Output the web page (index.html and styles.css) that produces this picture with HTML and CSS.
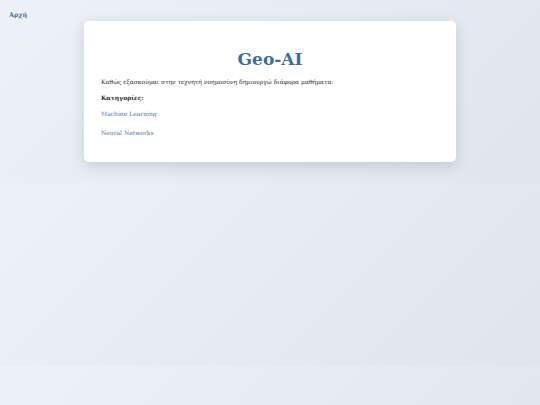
FILE: index.html
```html
<!DOCTYPE html>
<html lang="el">
<head>
<meta charset="utf-8">
<title>Geo-AI</title>
<link rel="stylesheet" href="styles.css">
</head>
<body>
<nav class="topnav"><a class="home" href="#">Αρχή</a></nav>
<main class="card">
  <h1 class="title">Geo-AI</h1>
  <p class="intro">Καθώς εξασκούμαι στην τεχνητή νοημοσύνη δημιουργώ διάφορα μαθήματα:</p>
  <p class="cat-label">Κατηγορίες:</p>
  <ul class="cats">
    <li><a href="#">Machine Learning</a></li>
    <li><a href="#">Neural Networks</a></li>
  </ul>
</main>
</body>
</html>
```

FILE: styles.css
```css
html {
  background: linear-gradient(135deg, #edf1f8 0%, #e0e5ed 100%);
  background-size: 100% 183px;
  background-repeat: repeat;
  min-height: 100%;
}
body {
  margin: 0;
  font-family: "DejaVu Serif", serif;
  color: #2b2b2b;
}
.topnav {
  padding: 8px 9px 0;
  height: 12px;
  line-height: 8px;
}
.home {
  font-size: 6.4px;
  font-weight: bold;
  color: #3a6ea5;
  text-decoration: none;
}
.card {
  width: 338px;
  margin: 1px auto 21px;
  padding: 17px;
  background: #fff;
  border-radius: 5px;
  box-shadow: 0 4px 14px rgba(40, 60, 90, 0.18);
}
.title {
  margin: 10px 0 7px;
  text-align: center;
  font-size: 17px;
  line-height: 23px;
  color: #3a6ea5;
}
.intro, .cat-label {
  margin: 0 0 8px;
  font-size: 6px;
  line-height: 8px;
}
.cat-label {
  font-weight: bold;
  margin-bottom: 8px;
}
.cats {
  list-style: none;
  margin: 0 0 8px;
  padding: 0;
  display: flex;
  flex-direction: column;
  gap: 11px;
}
.cats li {
  font-size: 6px;
  line-height: 8px;
}
.cats a {
  color: #4a78ad;
  text-decoration: none;
}
```
